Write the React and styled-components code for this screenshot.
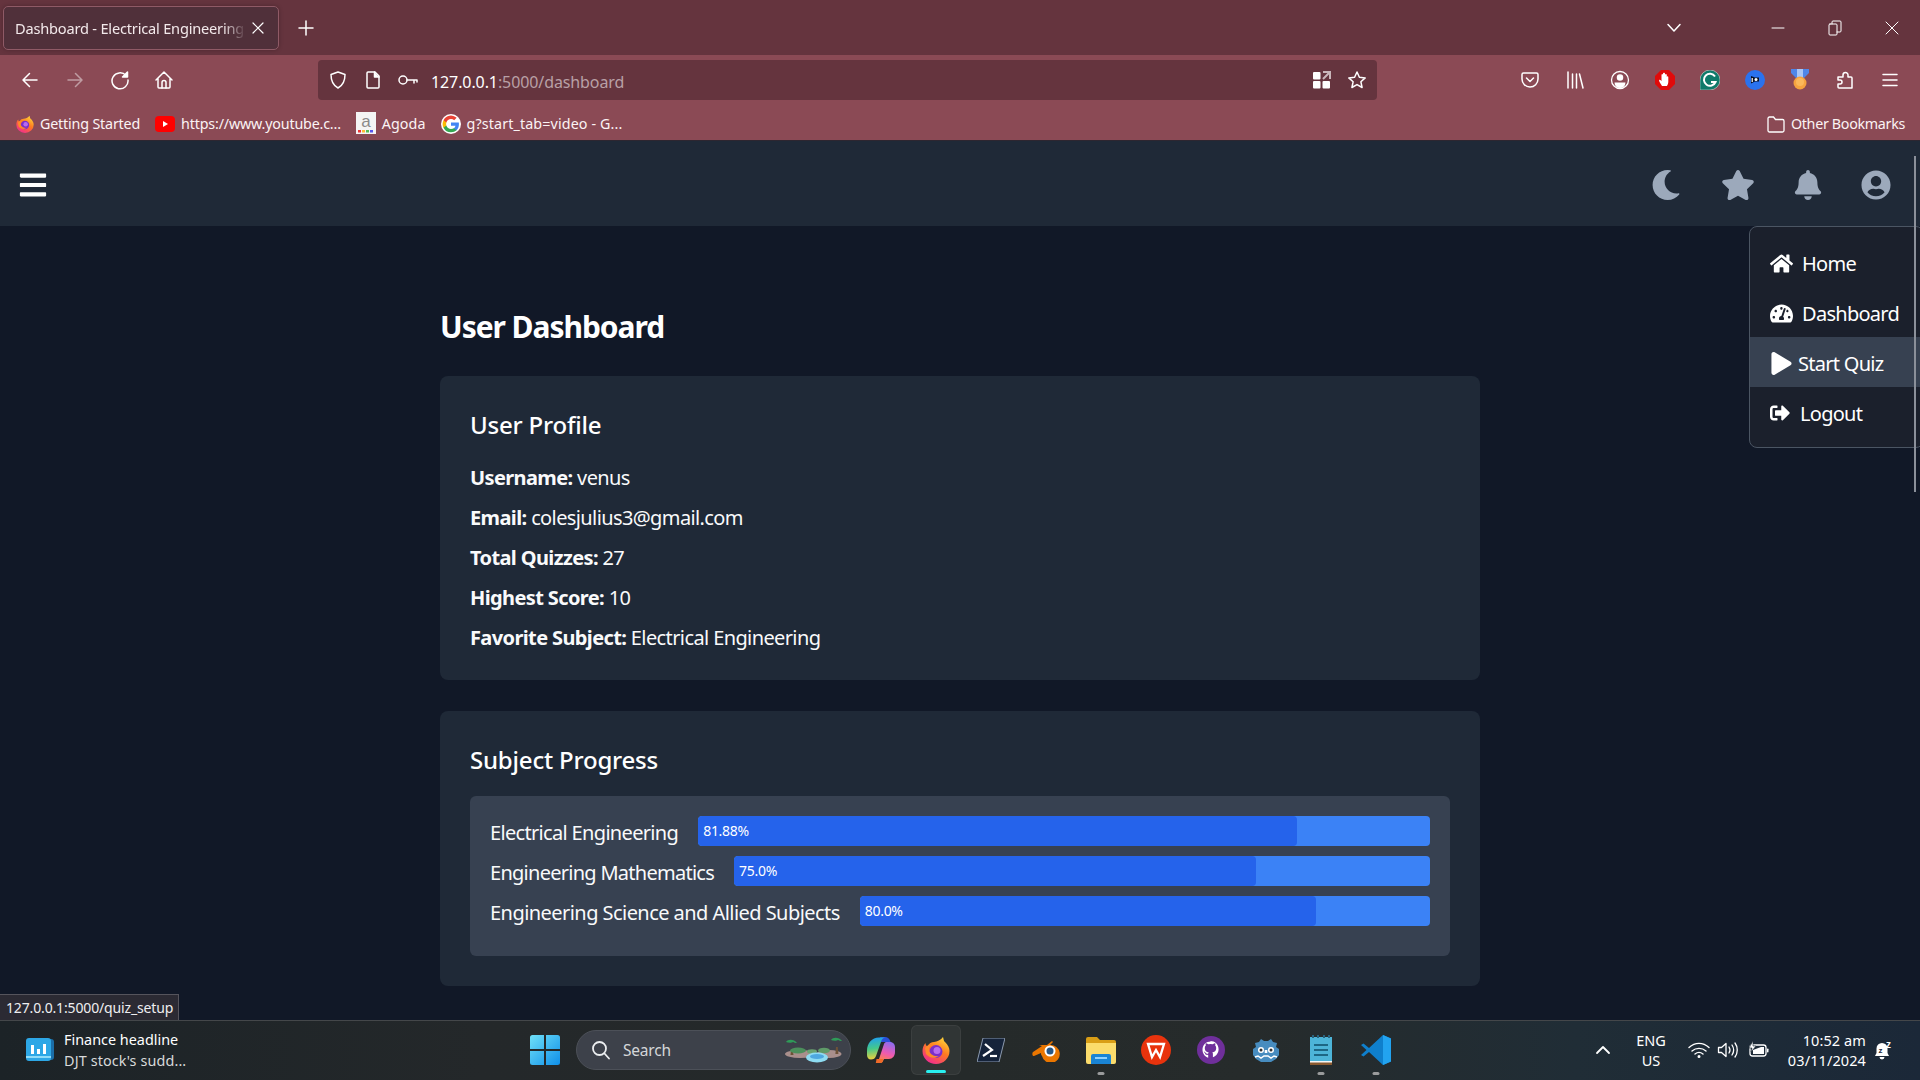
import React from "react";
import styled, { createGlobalStyle } from "styled-components";
import { FaBars, FaMoon, FaStar, FaBell, FaUserCircle, FaHome, FaTachometerAlt, FaPlay, FaSignOutAlt } from "react-icons/fa";

const SANS = `"Noto Sans", "Open Sans", Arial, sans-serif`;

const Global = createGlobalStyle`
  html, body { margin: 0; padding: 0; height: 100%; overflow: hidden; background: #111827; }
  * { box-sizing: border-box; }
  body { font-family: ${SANS}; color: #f9fafb; }
`;

const Screen = styled.div`position: relative; width: 1920px; height: 1080px; display: flex; flex-direction: column; overflow: hidden; background: #111827;`;

/* browser chrome */
const TabStrip = styled.div`height: 55px; background: #65343e; display: flex; align-items: center; padding-left: 3px; flex: none;`;
const Tab = styled.div`width: 276px; height: 44px; margin-top: 1px; background: #50303a; border: 1px solid #8f5a66; border-radius: 5px; display: flex; align-items: center; padding: 0 14px 0 11px; box-shadow: 0 0 4px rgba(0,0,0,.25);`;
const TabTitle = styled.div`flex: 1; font-size: 14.6px; letter-spacing: -0.2px; color: #f3e9eb; white-space: nowrap; overflow: visible; -webkit-mask-image: linear-gradient(to right, #000 90%, transparent 100%);`;
const TabClose = styled.span`display: flex; margin-left: 6px;`;
const NewTab = styled.span`display: flex; margin-left: 19px;`;
const StripRight = styled.div`margin-left: auto; display: flex; align-items: center;`;
const TabList = styled.span`display: flex; width: 20px; justify-content: center; margin-right: 65px;`;
const WinBtn = styled.span`width: 57px; display: flex; justify-content: center;`;

const NavBar = styled.div`height: 50px; background: #8b4a55; display: flex; align-items: center; flex: none;`;
const NavBtns = styled.div`width: 318px; padding-left: 8px; display: flex; align-items: center;`;
const NavBtn = styled.span`width: 44.7px; display: flex; justify-content: center; opacity: ${p => (p.$dim ? 0.45 : 1)};`;
const UrlBar = styled.div`width: 1059px; height: 40px; background: #65343e; border-radius: 4px; display: flex; align-items: center; padding: 0 3px 0 2px;`;
const UrlSlot = styled.span`width: 35px; display: flex; justify-content: center; flex: none;`;
const UrlText = styled.div`margin-left: 6px; padding-top: 3px; font-size: 16px; letter-spacing: -0.1px; color: #fff; flex: 1; white-space: nowrap;`;
const UrlDim = styled.span`color: #b9a0a6;`;
const Tools = styled.div`margin-left: auto; padding-right: 7.5px; display: flex; align-items: center;`;
const ToolSlot = styled.span`width: 45px; display: flex; justify-content: center;`;

const Bookmarks = styled.div`height: 35px; background: #8b4a55; display: flex; align-items: center; padding: 2px 15px 0 16px; flex: none;`;
const Mark = styled.div`display: flex; align-items: center; gap: 6px; margin-right: 15px; font-size: 14.3px; letter-spacing: ${p => p.$track ?? -0.18}px; color: #fbf3f4; white-space: nowrap;`;
const MarkIcon = styled.span`display: flex; flex: none;`;
const OtherMarks = styled(Mark)`margin-left: auto; margin-right: 0; gap: 5px; letter-spacing: -0.32px;`;
const ChromeEdge = styled.div`height: 1px; background: #2d2630; flex: none;`;

/* page */
const Page = styled.div`flex: 1; min-height: 0; background: #111827; display: flex; flex-direction: column; overflow: hidden;`;
const TopBar = styled.header`height: 85px; background: #1f2937; display: flex; align-items: center; justify-content: space-between; padding: 2px 29px 0 18px; flex: none;`;
const Burger = styled.span`display: flex; color: #fff;`;
const TopActions = styled.div`display: flex; align-items: center; color: #9ca9bb;`;
const TopAction = styled.span`display: flex; margin-right: ${p => p.$gap}px;`;
const Main = styled.main`width: 1040px; margin: 0 auto; padding-top: 83px; flex: 1;`;
const Title = styled.h1`margin: 0 0 31px; font-size: 30px; line-height: 36px; font-weight: 700; letter-spacing: -1.05px; color: #fff;`;
const Card = styled.section`background: #1f2937; border-radius: 8px; padding: 30px; margin-bottom: 31px;`;
const CardTitle = styled.h2`margin: 0 0 ${p => p.$gap}px; font-size: 24px; line-height: 38px; font-weight: 500; letter-spacing: -0.2px; color: #fff;`;
const Stat = styled.p`margin: 0 0 16px; font-size: 20px; line-height: 24px; letter-spacing: -0.61px; color: #f9fafb; &:last-child { margin-bottom: 0; }`;
const StatKey = styled.strong`font-weight: 700; letter-spacing: -0.62px;`;
const Inner = styled.div`background: #374151; border-radius: 6px; padding: 20px 20px 30px;`;
const Row = styled.div`display: flex; align-items: center; gap: 20px; height: 30px; margin-bottom: 10px; &:last-child { margin-bottom: 0; }`;
const RowLabel = styled.span`font-size: 20px; line-height: 28px; letter-spacing: ${p => p.$track}px; color: #f9fafb; white-space: nowrap; position: relative; top: 2px;`;
const Track = styled.div`flex: 1; height: 30px; background: #3b82f6; border-radius: 4px; overflow: hidden;`;
const Fill = styled.div`height: 30px; background: #2563eb; border-radius: 4px; padding-left: 5px; font-size: 14px; line-height: 30px; letter-spacing: -0.3px; color: #fff; white-space: nowrap;`;

/* overlays */
const Menu = styled.nav`position: absolute; top: 226px; left: 1749px; width: 175px; height: 222px; background: #1b202c; border: 1px solid #4b5563; border-radius: 8px; padding: 10px 0; display: flex; flex-direction: column;`;
const MenuItem = styled.a`height: 50px; display: flex; align-items: center; padding: 2px 0 0 20px; gap: ${p => p.$gap}px; font-size: 20px; letter-spacing: -0.72px; color: #fff; background: ${p => (p.$active ? "#374151" : "transparent")};`;
const Scroll = styled.div`position: absolute; top: 156px; left: 1914px; width: 2px; height: 336px; background: #8b909a;`;
const Status = styled.div`position: absolute; top: 994px; left: 0; width: 179px; height: 26px; background: #2b2a33; border: 1px solid #55545c; border-left: 0; border-bottom: 0; padding-left: 6px; font-size: 14px; line-height: 25px; letter-spacing: -0.15px; color: #eeeef0; white-space: nowrap;`;

/* taskbar */
const Taskbar = styled.footer`height: 60px; flex: none; display: flex; align-items: center; padding-bottom: 2px; border-top: 1px solid #44474a; background: linear-gradient(90deg, #1c2327 0%, #24282a 25%, #252a2a 50%, #262b2b 65%, #202d36 82%, #1b2838 100%);`;
const Widget = styled.div`width: 520px; height: 100%; padding-left: 26px; display: flex; align-items: center; gap: 10px;`;
const WidgetText = styled.div`display: flex; flex-direction: column; font-size: 14.4px; line-height: 21px; letter-spacing: 0; color: #fff;`;
const WidgetSub = styled.span`color: #d8dadb; letter-spacing: 0.12px;`;
const WinSlot = styled.span`width: 50px; display: flex; justify-content: center;`;
const SearchBox = styled.div`position: relative; width: 275px; height: 40px; margin-left: 6px; border-radius: 20px; background: #3d414a; border: 1px solid #4c5058; display: flex; align-items: center; padding-left: 14px; gap: 12px; font-size: 15.5px; letter-spacing: -0.2px; color: #d4d6d9;`;
const SearchArt = styled.span`display: flex; margin-left: auto; margin-right: 8px;`;
const Apps = styled.div`display: flex; align-items: center; margin-left: 2.5px;`;
const AppSlot = styled.div`position: relative; width: 55px; height: 50px; display: flex; align-items: center; justify-content: center; border-radius: 6px;`;
const ActiveTile = styled.span`position: absolute; left: 2.5px; right: 2.5px; top: 0; bottom: 0; background: rgba(255,255,255,.055); border: 1px solid rgba(255,255,255,.05); border-radius: 6px;`;
const Indicator = styled.span`position: absolute; left: 50%; bottom: ${p => (p.$on ? 2 : 0)}px; transform: translateX(-50%); width: ${p => (p.$on ? 20 : 7)}px; height: 3px; border-radius: 2px; background: ${p => (p.$on ? "#29f0f0" : "#9a9b9c")};`;
const AppIcon = styled.span`position: relative; display: flex;`;
const Tray = styled.div`margin-left: auto; padding-right: 14px; display: flex; align-items: center; color: #fff;`;
const TraySlot = styled.span`width: ${p => p.$w}px; display: flex; justify-content: center;`;
const Lang = styled.div`width: 66px; text-align: center; font-size: 14.5px; line-height: 20px; letter-spacing: 0;`;
const Clock = styled.div`width: 93px; text-align: right; font-size: 14.5px; line-height: 20px; letter-spacing: 0.1px;`;

const S = { fill: "none", stroke: "#fff", strokeWidth: 1.5, strokeLinecap: "round", strokeLinejoin: "round" };
const Ic = ({ w = 20, h = 20, vb, children, ...r }) => <svg width={w} height={h} viewBox={vb || `0 0 ${w} ${h}`} {...r}>{children}</svg>;

const Back = () => <Ic {...S}><path d="M17 10H3.5M9.5 3.5 3 10l6.5 6.5" /></Ic>;
const Forward = () => <Ic {...S}><path d="M3 10h13.5M10.5 3.5 17 10l-6.5 6.5" /></Ic>;
const Reload = () => <Ic {...S}><path d="M16 5.5A8 8 0 1 0 18 10" /><path d="M17.5 2v5h-5z" fill="#fff" /></Ic>;
const HomeIc = () => <Ic {...S}><path d="M2 10 10 2l8 8M4 8.5V17a1 1 0 0 0 1 1h10a1 1 0 0 0 1-1V8.5" /><path d="M8 18v-5.5a2 2 0 0 1 4 0V18" /></Ic>;
const Shield = () => <Ic {...S}><path d="M10 2 3 4.5c0 7 2.3 11 7 13.5 4.7-2.5 7-6.500 7-13.500z" /></Ic>;
const PageIc = () => <Ic {...S}><path d="M5 2h7l4 4v11a1 1 0 0 1-1 1H5a1 1 0 0 1-1-1V3a1 1 0 0 1 1-1z" /><path d="M11.500 2v5H16" fill="#fff" /></Ic>;
const Key = () => <Ic {...S} w={22} h={20}><circle cx="6" cy="10" r="4" /><path d="M10 10h10M17 10v3M20 10v2" /></Ic>;
const AppsIc = () => <Ic w={20} h={20}><rect x="1" y="2" width="7.500" height="7.500" rx="1" fill="#fff" /><rect x="1" y="11" width="7.500" height="7.500" rx="1" fill="#fff" /><rect x="10.500" y="11" width="7.500" height="7.500" rx="1" fill="#fff" /><path d="M11 2h7v7M18 2l-7 7" stroke="#c9b6ba" strokeWidth="2" fill="none" /></Ic>;
const StarOut = () => <Ic {...S}><path d="m10 2 2.400 5.300 5.800.6-4.300 3.900 1.200 5.700L10 14.600 4.900 17.500l1.200-5.700L1.800 7.900l5.800-.6z" /></Ic>;
const Pocket = () => <Ic {...S}><path d="M3.500 3h13A1.500 1.500 0 0 1 18 4.500V9a8 8 0 0 1-16 0V4.500A1.500 1.500 0 0 1 3.500 3z" /><path d="m6.500 8 3.500 3.500L13.500 8" /></Ic>;
const Library = () => <Ic {...S}><path d="M3 2v16M7.500 4v14M11.500 4v14M14.500 4 18 18" /></Ic>;
const Account = () => <Ic {...S} strokeWidth={1.3}><circle cx="10" cy="10" r="8.500" /><circle cx="10" cy="7.500" r="2.600" fill="#fff" /><path d="M4.500 12.500h11a5.500 5.500 0 0 1-11 0z" fill="#fff" stroke="none" /></Ic>;
const Ublock = () => <Ic><path d="M6 0h8l6 6v8l-6 6H6l-6-6V6z" fill="#e00a0a" /><path d="M7 16c-1-2-3-4-3-6 1-.6 2 .4 2.500 1.300V5c0-1.300 1.500-1.300 1.500 0V3.800c0-1.300 2-1.300 2 0V5c0-1.200 1.800-1.200 1.800 0v2c0-1 1.500-1 1.500 0v5c0 2-1 3-1.300 4z" fill="#fff" /></Ic>;
const Gram = () => <Ic><path d="M10 0a10 10 0 0 1 0 20H0v-10A10 10 0 0 1 10 0z" fill="#0e7a6a" stroke="#cfd8d5" strokeWidth=".6" /><path d="M15 6.500A6 6 0 1 0 15.500 12H11" fill="none" stroke="#fff" strokeWidth="2" /></Ic>;
const PiP = () => <Ic><circle cx="10" cy="10" r="10" fill="#2a72ee" /><path d="M6 6l4 1.500h4v4H10l-4 2z" fill="#0b1122" /><circle cx="11" cy="9.500" r="1.500" fill="#fff" /><rect x="6.600" y="8" width="1.200" height="4" fill="#fff" /></Ic>;
const Medal = () => <Ic w={20} h={22}><path d="M1 0h18v4l-6 6H7L1 4z" fill="#4f86e8" /><path d="M7 0h6v9H7z" fill="#a9c6f5" /><circle cx="10" cy="14" r="6.500" fill="#f6a33f" /><circle cx="10" cy="13" r="4" fill="#fbb85a" /></Ic>;
const Puzzle = () => <Ic {...S}><path d="M3 7h5V5a2.500 2.500 0 0 1 5 0v2h3a1 1 0 0 1 1 1v10H4a1 1 0 0 1-1-1v-3h2a2 2 0 0 0 0-4H3z" /></Ic>;
const Hamb = () => <Ic {...S}><path d="M3 4.500h14M3 10h14M3 15.500h14" /></Ic>;
const Folder = ({ c = "#fff" }) => <Ic fill="none" stroke={c} strokeWidth="1.300"><path d="M2 4.500A1.500 1.500 0 0 1 3.500 3h4l2 2.500h7A1.500 1.500 0 0 1 18 7v9.500a1.500 1.500 0 0 1-1.500 1.500h-13A1.500 1.500 0 0 1 2 16.500z" /></Ic>;

const Firefox = ({ size = 28, id }) => (
  <svg width={size} height={size} viewBox="0 0 28 28">
    <defs>
      <linearGradient id={`${id}a`} x1="0.8" y1="0" x2="0.2" y2="1"><stop offset="0" stopColor="#ffd93b" /><stop offset=".45" stopColor="#ff7a1f" /><stop offset="1" stopColor="#f0259a" /></linearGradient>
    </defs>
    <path d="M21 1c1 3 .5 4 2 5 3 3 4.500 6 4.500 9a13.500 13 0 0 1-27 0c0-3 1-6 3-8 0 2 1 3 2 3.500C7 7 9.500 6 12 6c3-.5 7-2 9-5z" fill={`url(#${id}a)`} />
    <circle cx="14" cy="15.500" r="6.500" fill="#7b2fc9" />
    <circle cx="15" cy="14.500" r="3.500" fill="#b76cf0" />
    <path d="M3 12c2-3 5-4 8-3-2 .5-4 2-4 4 0 5 5 8 10 7-4 3-10 2-13-2z" fill="#ff8a2a" />
  </svg>
);
const YouTube = () => <Ic w={20} h={18}><rect y="1" width="20" height="16" rx="4" fill="#f00" /><path d="m8 6 5 3-5 3z" fill="#fff" /></Ic>;
const Agoda = () => <Ic w={20} h={22} style={{ marginTop: -2 }}><rect width="20" height="22" fill="#f4f4f4" /><text x="10" y="15" textAnchor="middle" fontSize="17" fontFamily="Liberation Sans" fill="#8a8a8a">a</text><rect x="2" y="18" width="3" height="2.500" fill="#e33" /><rect x="6" y="18" width="3" height="2.500" fill="#fb3" /><rect x="10" y="18" width="3" height="2.500" fill="#5b5" /><rect x="14" y="18" width="3" height="2.500" fill="#55e" /></Ic>;
const Google = () => (
  <svg width="20" height="20" viewBox="0 0 48 48"><circle cx="24" cy="24" r="24" fill="#fff" />
    <path fill="#4285f4" d="M43 24.500c0-1.400-.1-2.800-.4-4H24v7.600h10.800a9.300 9.300 0 0 1-4 6v5h6.500c3.700-3.500 5.700-8.600 5.700-14.600z" />
    <path fill="#34a853" d="M24 44c5.400 0 10-1.800 13.300-4.800l-6.500-5c-1.800 1.200-4.100 1.900-6.800 1.900-5.200 0-9.600-3.500-11.200-8.300H6.100v5.200A20 20 0 0 0 24 44z" />
    <path fill="#fbbc05" d="M12.800 27.800a12 12 0 0 1 0-7.600V15H6.100a20 20 0 0 0 0 18z" />
    <path fill="#ea4335" d="M24 11.900c3 0 5.600 1 7.700 3l5.800-5.800A20 20 0 0 0 6.100 15l6.700 5.200c1.600-4.800 6-8.300 11.200-8.300z" /></svg>
);
const WidgetIc = () => <Ic w={28} h={24} vb="0 0 28 24"><rect x="3" y="1" width="25" height="21" rx="3" fill="#1b6ea8" /><rect x="0" y="0" width="25" height="23" rx="3" fill="#2da7e6" /><rect x="5" y="7" width="3" height="9" fill="#fff" /><rect x="11" y="11" width="3" height="5" fill="#fff" /><rect x="17" y="6" width="3" height="10" fill="#fff" /><rect x="0" y="18" width="25" height="2" fill="#8fdcf8" /></Ic>;
const Windows = () => <Ic w={30} h={30}><defs><linearGradient id="wn" x1="0" y1="0" x2="1" y2="1"><stop offset="0" stopColor="#6fe0f8" /><stop offset="1" stopColor="#0f8fe8" /></linearGradient></defs><path d="M0 2.500A2.500 2.500 0 0 1 2.500 0H14v14H0zM16 0h11.500A2.500 2.500 0 0 1 30 2.500V14H16zM0 16h14v14H2.500A2.500 2.500 0 0 1 0 27.500zM16 16h14v11.500a2.500 2.500 0 0 1-2.500 2.500H16z" fill="url(#wn)" /></Ic>;
const Magnifier = () => <Ic fill="none" stroke="#eceef0" strokeWidth="1.800" strokeLinecap="round"><circle cx="8.500" cy="8.500" r="6.500" /><path d="m13.500 13.500 4.500 5" /></Ic>;
const IslandArt = () => (
  <Ic w={58} h={26}>
    <ellipse cx="16" cy="17" rx="15" ry="4" fill="#a98f8c" />
    <ellipse cx="45" cy="17" rx="12.500" ry="4" fill="#a98f8c" />
    <path d="M7 13h1.800l.7 5H6.500zM52 10h1.800l.6 7h-3z" fill="#6d5237" />
    <path d="M2 5c2-3 8-3 11 1-2 0-3-.5-4-1-1 1-5 1-7 0zM47 3c2-3 8-3 11 1-2 0-3-.5-4-1-1 1-5 1-7 0z" fill="#2f9a58" />
    <ellipse cx="14" cy="13.500" rx="8" ry="3" fill="#4c8f5c" />
    <ellipse cx="28" cy="14.500" rx="5" ry="2.200" fill="#6aa272" />
    <ellipse cx="40" cy="13.500" rx="6" ry="2.800" fill="#5f9a68" />
    <ellipse cx="33" cy="20.500" rx="11" ry="5" fill="#8edcf2" />
    <ellipse cx="33" cy="19.500" rx="7" ry="2.500" fill="#4ea8e0" />
  </Ic>
);
const Copilot = () => (
  <Ic w={28} h={26}><defs><linearGradient id="cp1" x1=".3" y1="0" x2=".4" y2="1"><stop offset="0" stopColor="#1e9ff0" /><stop offset=".5" stopColor="#45c98a" /><stop offset="1" stopColor="#f3d13a" /></linearGradient><linearGradient id="cp2" x1=".7" y1="0" x2=".4" y2="1"><stop offset="0" stopColor="#8a6cf0" /><stop offset=".55" stopColor="#ef5ab0" /><stop offset="1" stopColor="#ff8a35" /></linearGradient></defs>
    <path d="M13 0h5c2.500 0 4 1.500 5 3.500l1 2.500-6-1h-4z" fill="#2a4fd8" />
    <path d="M24 5c2.500.5 4 2.500 4 5v5c0 4-2.500 7-6 7h-5l-1.500 3c-1 .8-2 1-3 1H10l1-1 6-18c.5-1.500 1.500-2 3-2z" fill="url(#cp2)" />
    <path d="M12 .5h6c-2 .5-3 1.500-3.500 3L9 19c-.8 2.500-2.500 3.500-5 3.500C1.500 22.500 0 20.500 0 18v-4C0 6 5 .5 12 .5z" fill="url(#cp1)" />
    <path d="M9.500 22h7l-1.500 3.500c-.5.500-1.500.5-2.500.5h-3c-.5 0-1-.5-.5-1z" fill="#f06a28" />
  </Ic>
);
const Terminal = () => <Ic w={28} h={24}><path d="M6 0h22l-6 24H0z" fill="#15233a" stroke="#8c9bb0" strokeWidth="1" /><path d="m8 6 7 6-9 6" fill="none" stroke="#fff" strokeWidth="2.200" /><path d="M13 18h7" stroke="#fff" strokeWidth="2.200" /></Ic>;
const Blender = () => <Ic w={28} h={24}><path d="M1 14 10 8 7 7h8l5-4 1 1-3 3a9 9 0 1 1-8 11c-1-1-1-2-1-3l-7 3c-2 0-2-3-1-4z" fill="#ea7600" /><circle cx="18" cy="13" r="5.500" fill="#fff" /><circle cx="18" cy="13" r="3.500" fill="#265787" /></Ic>;
const Files = () => <Ic w={30} h={28}><path d="M0 3a2 2 0 0 1 2-2h9l3 3h14a2 2 0 0 1 2 2v3H0z" fill="#d99e16" /><path d="M0 7h30v19a2 2 0 0 1-2 2H2a2 2 0 0 1-2-2z" fill="#fbdc6c" /><path d="M5 20a2 2 0 0 1 2-2h16a2 2 0 0 1 2 2v8H5z" fill="#1a84d4" /><rect x="9" y="21" width="12" height="2" fill="#8fd2ff" /></Ic>;
const Wps = () => <Ic w={30} h={30}><circle cx="15" cy="15" r="15" fill="#e8330d" /><path d="M7 9h16l-4 13-4-7-4 7z" fill="none" stroke="#fff" strokeWidth="2.300" strokeLinejoin="miter" /></Ic>;
const Github = () => <Ic w={28} h={28} vb="0 0 28 28"><circle cx="14" cy="14" r="14" fill="#6f2f9b" /><path d="M14 5.500c-5 0-8.500 3.500-8.500 8.300 0 3.700 2.300 6.800 5.700 8v-3c-2.200.4-2.800-.5-3-1.100-.1-.4-.6-1.200-1-1.400-.3-.2-.8-.6 0-.6.7 0 1.200.7 1.400 1 .8 1.300 2 1 2.600.7 0-.6.300-1 .6-1.200-2-.2-4-1-4-4.300 0-1 .3-1.700 1-2.400 0-.2-.3-1.100 0-2.300 0 0 .8-.2 2.500 1a8 8 0 0 1 4.400 0c1.700-1.200 2.500-1 2.500-1 .3 1.200.1 2.100 0 2.300.6.700 1 1.400 1 2.400 0 3.300-2 4.100-4 4.300.3.300.7.800.7 1.600v3.400c3.300-1.200 5.700-4.300 5.700-8 0-4.800-3.500-8.300-8.600-8.300z" fill="#fff" /></Ic>;
const Godot = () => <Ic w={28} h={26}><path d="M9 2l3 2h4l3-2 2 3 4 1-1 4 3 2v6l-3 4-5 3H9l-5-3-3-4v-6l3-2-1-4 4-1z" fill="#478cbf" /><circle cx="9" cy="13" r="3" fill="#fff" /><circle cx="19" cy="13" r="3" fill="#fff" /><circle cx="9" cy="13" r="1.500" fill="#333" /><circle cx="19" cy="13" r="1.500" fill="#333" /><rect x="12.700" y="13" width="2.600" height="3" fill="#fff" /><path d="M3 20l3-1 3 2 3-2 4 0 3 2 3-2 3 1" fill="none" stroke="#fff" strokeWidth="1.500" /></Ic>;
const Notepad = () => <Ic w={22} h={30}><rect y="2" width="22" height="25" fill="#4db4d8" /><rect y="26" width="22" height="4" fill="#8a5a30" /><rect y="26" width="22" height="1.500" fill="#f5f5f5" /><path d="M2 0h2v3H2zM7 0h2v3H7zM13 0h2v3h-2zM18 0h2v3h-2z" fill="#29627c" /><path d="M4 9h14v2H4zM4 14h14v2H4zM4 19h14v2H4z" fill="#1d6684" /></Ic>;
const VSCode = () => <Ic w={30} h={30}><path d="M22 0l8 3.500v23L22 30 8 17l-5.500 4.500L0 20l5.500-5L0 10l2.500-1.500L8 13z" fill="#0f7fcc" /><path d="M22 0l8 3.500v23L22 30z" fill="#22a3f0" /></Ic>;

const TrayChevron = () => <Ic {...S} strokeWidth="1.800" w={16} h={12}><path d="m2 9 6-6 6 6" /></Ic>;
const Wifi = () => <Ic {...S} w={22} h={18} strokeWidth="1.400"><path d="M1 6.500c6-5.500 14-5.500 20 0M4 10c4-3.500 10-3.500 14 0M7 13c2.500-2 5.500-2 8 0" /><circle cx="11" cy="15.500" r=".8" fill="#fff" /></Ic>;
const Volume = () => <Ic {...S} w={22} h={18} strokeWidth="1.300"><path d="M1.500 6.500h3L9 2.500v13l-4.500-4h-3z" /><path d="M12 6c1.200 1.800 1.200 4.200 0 6M15 4c2 3 2 7 0 10M18 2c3 4 3 10 0 14" /></Ic>;
const Battery = () => <Ic w={22} h={18}><rect x="3" y="4" width="16" height="11" rx="2.500" fill="none" stroke="#fff" strokeWidth="1.300" /><path d="M6 13V9l8-3h3v7z" fill="#fff" /><rect x="20" y="7.500" width="1.500" height="4" rx=".7" fill="#fff" /><path d="M6 0 2 7h3l-1 4 5-6H6z" fill="#fff" stroke="#1e2b36" strokeWidth=".6" /></Ic>;
const BellZ = () => <Ic w={22} h={20}><path d="M7 3a5.500 5.500 0 0 0-5.500 5.500V13L0 16h14l-1.500-3V8.500A5.500 5.500 0 0 0 7 3zM4.500 17h5a2.500 2.500 0 0 1-5 0z" fill="#fff" /><text x="3.500" y="13" fontSize="8" fontFamily="Liberation Sans" fontWeight="700" fill="#1b2838">z</text><text x="11" y="8" fontSize="10" fontFamily="Liberation Sans" fontWeight="700" fill="#fff">z</text></Ic>;

const stats = [["Username:", "venus"], ["Email:", "colesjulius3@gmail.com"], ["Total Quizzes:", "27"], ["Highest Score:", "10"], ["Favorite Subject:", "Electrical Engineering"]];
const subjects = [["Electrical Engineering", 81.88, "81.88%", -0.67], ["Engineering Mathematics", 75, "75.0%", -0.73], ["Engineering Science and Allied Subjects", 80, "80.0%", -0.55]];
const apps = [
  [<Copilot key="c" />], [<Firefox key="f" id="tf" />, "active"], [<Terminal key="t" />], [<Blender key="b" />], [<Files key="e" />, "dot"],
  [<Wps key="w" />], [<Github key="g" />], [<Godot key="o" />], [<Notepad key="n" />, "dot"], [<VSCode key="v" />, "dot"],
];

export default function App() {
  return (
    <Screen>
      <Global />
      <TabStrip>
        <Tab>
          <TabTitle>Dashboard - Electrical Engineering</TabTitle>
          <TabClose><Ic w={12} h={12} {...S} strokeWidth="1.200"><path d="m1 1 10 10M11 1 1 11" /></Ic></TabClose>
        </Tab>
        <NewTab><Ic w={16} h={16} {...S}><path d="M8 1v14M1 8h14" /></Ic></NewTab>
        <StripRight>
          <TabList><Ic w={16} h={10} {...S}><path d="m2 1.500 6 6.500 6-6.500" /></Ic></TabList>
          <WinBtn><Ic w={14} h={2} {...S} strokeWidth="1"><path d="M1 1h12" /></Ic></WinBtn>
          <WinBtn><Ic w={14} h={16} {...S} strokeWidth="1"><rect x="1" y="4" width="8" height="11" rx="1" /><path d="M4 4V2a1 1 0 0 1 1-1h7a1 1 0 0 1 1 1v9a1 1 0 0 1-1 1H9" /></Ic></WinBtn>
          <WinBtn><Ic w={14} h={14} {...S} strokeWidth="1"><path d="m1 1 12 12M13 1 1 13" /></Ic></WinBtn>
        </StripRight>
      </TabStrip>

      <NavBar>
        <NavBtns>
          <NavBtn><Back /></NavBtn>
          <NavBtn $dim><Forward /></NavBtn>
          <NavBtn><Reload /></NavBtn>
          <NavBtn><HomeIc /></NavBtn>
        </NavBtns>
        <UrlBar>
          <UrlSlot><Shield /></UrlSlot>
          <UrlSlot><PageIc /></UrlSlot>
          <UrlSlot><Key /></UrlSlot>
          <UrlText>127.0.0.1<UrlDim>:5000/dashboard</UrlDim></UrlText>
          <UrlSlot><AppsIc /></UrlSlot>
          <UrlSlot><StarOut /></UrlSlot>
        </UrlBar>
        <Tools>
          {[Pocket, Library, Account, Ublock, Gram, PiP, Medal, Puzzle, Hamb].map((C, i) => <ToolSlot key={i}><C /></ToolSlot>)}
        </Tools>
      </NavBar>

      <Bookmarks>
        <Mark><MarkIcon><Firefox size={18} id="bf" /></MarkIcon>Getting Started</Mark>
        <Mark><MarkIcon><YouTube /></MarkIcon>https://www.youtube.c...</Mark>
        <Mark $track={0.05}><MarkIcon><Agoda /></MarkIcon>Agoda</Mark>
        <Mark $track={0.12}><MarkIcon><Google /></MarkIcon>g?start_tab=video - G...</Mark>
        <OtherMarks><MarkIcon><Folder /></MarkIcon>Other Bookmarks</OtherMarks>
      </Bookmarks>
      <ChromeEdge />

      <Page>
        <TopBar>
          <Burger><FaBars size={30} /></Burger>
          <TopActions>
            <TopAction $gap={40}><FaMoon size={30} /></TopAction>
            <TopAction $gap={38}><FaStar size={34} /></TopAction>
            <TopAction $gap={38}><FaBell size={30} /></TopAction>
            <TopAction $gap={0}><FaUserCircle size={30} /></TopAction>
          </TopActions>
        </TopBar>
        <Main>
          <Title>User Dashboard</Title>
          <Card>
            <CardTitle $gap={22}>User Profile</CardTitle>
            {stats.map(([k, v]) => <Stat key={k}><StatKey>{k}</StatKey> {v}</Stat>)}
          </Card>
          <Card>
            <CardTitle $gap={17}>Subject Progress</CardTitle>
            <Inner>
              {subjects.map(([name, pct, label, track]) => (
                <Row key={name}>
                  <RowLabel $track={track}>{name}</RowLabel>
                  <Track><Fill style={{ width: `${pct}%` }}>{label}</Fill></Track>
                </Row>
              ))}
            </Inner>
          </Card>
        </Main>
      </Page>

      <Taskbar>
        <Widget>
          <WidgetIc />
          <WidgetText>Finance headline<WidgetSub>DJT stock's sudd...</WidgetSub></WidgetText>
        </Widget>
        <WinSlot><Windows /></WinSlot>
        <SearchBox>
          <Magnifier />Search
          <SearchArt><IslandArt /></SearchArt>
        </SearchBox>
        <Apps>
          {apps.map(([icon, state], i) => (
            <AppSlot key={i}>
              {state === "active" && <ActiveTile />}
              <AppIcon>{icon}</AppIcon>
              {state && <Indicator $on={state === "active"} />}
            </AppSlot>
          ))}
        </Apps>
        <Tray>
          <TraySlot $w={30}><TrayChevron /></TraySlot>
          <Lang>ENG<br />US</Lang>
          <TraySlot $w={29}><Wifi /></TraySlot>
          <TraySlot $w={30}><Volume /></TraySlot>
          <TraySlot $w={30}><Battery /></TraySlot>
          <Clock>10:52 am<br />03/11/2024</Clock>
          <TraySlot $w={40}><BellZ /></TraySlot>
        </Tray>
      </Taskbar>

      <Menu>
        <MenuItem $gap={9}><FaHome size={23} />Home</MenuItem>
        <MenuItem $gap={9}><FaTachometerAlt size={23} />Dashboard</MenuItem>
        <MenuItem $active $gap={5}><FaPlay size={23} />Start Quiz</MenuItem>
        <MenuItem $gap={10}><FaSignOutAlt size={20} />Logout</MenuItem>
      </Menu>
      <Scroll />
      <Status>127.0.0.1:5000/quiz_setup</Status>
    </Screen>
  );
}
